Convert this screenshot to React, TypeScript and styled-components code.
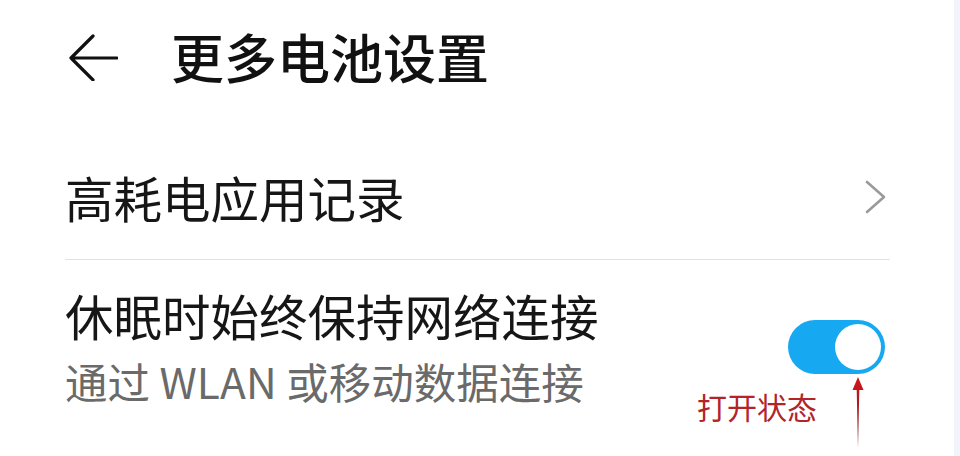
import { createGlobalStyle, styled } from 'styled-components';

const GlobalStyle = createGlobalStyle`
    html, body {
        margin: 0;
        padding: 0;
        background: #f1f4fb;
    }
    body {
        font-family: 'Noto Sans CJK SC', 'Noto Sans', sans-serif;
    }
`;

const Page = styled.div`
    position: relative;
    width: 960px;
    height: 456px;
    display: flex;
    overflow: hidden;
`;

const Panel = styled.div`
    width: 954px;
    background: #ffffff;
    display: flex;
    flex-direction: column;
`;

const Header = styled.header`
    display: flex;
    align-items: center;
    padding: 30px 0 38px 66px;
`;

const BackButton = styled.button`
    border: none;
    background: none;
    padding: 0;
    width: 56px;
    height: 52px;
    display: flex;
    align-items: center;
`;

const Title = styled.h1`
    margin: 0 0 0 49px;
    font-size: 53px;
    line-height: 52px;
    font-weight: 500;
    color: #111111;
`;

const List = styled.div`
    padding: 0 64px 0 65px;
    display: flex;
    flex-direction: column;
`;

const Row = styled.div<{ divider?: boolean }>`
    display: flex;
    align-items: center;
    justify-content: space-between;
    padding: ${({ divider }) => (divider ? '53px 0 38px' : '31px 0 0')};
    border-bottom: ${({ divider }) => (divider ? '1px solid #e2e2e2' : 'none')};
`;

const TextBlock = styled.div`
    display: flex;
    flex-direction: column;
`;

const Label = styled.span`
    font-size: 48.5px;
    line-height: 48px;
    color: #161616;
`;

const Caption = styled.span`
    margin-top: 21px;
    font-size: 42.5px;
    line-height: 42px;
    color: #6a6a6a;
`;

const Switch = styled.div<{ on: boolean }>`
    width: 97px;
    height: 54px;
    border-radius: 27px;
    background: ${({ on }) => (on ? '#17a8f2' : '#d8d8d8')};
    display: flex;
    align-items: center;
    justify-content: ${({ on }) => (on ? 'flex-end' : 'flex-start')};
    padding: 0 4px;
    box-sizing: border-box;
    margin-right: 5px;
`;

const Knob = styled.div`
    width: 46px;
    height: 46px;
    border-radius: 50%;
    background: #ffffff;
`;

const Note = styled.span`
    position: absolute;
    left: 697px;
    top: 391px;
    font-size: 30px;
    line-height: 30px;
    color: #b3232a;
`;

const NoteArrow = styled.svg`
    position: absolute;
    left: 850px;
    top: 376px;
`;

const App = () => {
    return (
        <Page>
            <GlobalStyle />
            <Panel>
                <Header>
                    <BackButton aria-label="返回">
                        <svg width="52" height="50" viewBox="0 0 52 50">
                            <path
                                d="M51 27H5M27 5L5 27l22 22"
                                fill="none"
                                stroke="#111"
                                strokeWidth="3.2"
                                strokeLinecap="round"
                                strokeLinejoin="round"
                            />
                        </svg>
                    </BackButton>
                    <Title>更多电池设置</Title>
                </Header>
                <List>
                    <Row divider>
                        <Label>高耗电应用记录</Label>
                        <svg width="26" height="36" viewBox="0 0 26 36">
                            <path
                                d="M3 3l17 15L3 33"
                                fill="none"
                                stroke="#9a9a9a"
                                strokeWidth="2.6"
                                strokeLinecap="round"
                                strokeLinejoin="round"
                            />
                        </svg>
                    </Row>
                    <Row>
                        <TextBlock>
                            <Label>休眠时始终保持网络连接</Label>
                            <Caption>通过 WLAN 或移动数据连接</Caption>
                        </TextBlock>
                        <Switch on>
                            <Knob />
                        </Switch>
                    </Row>
                </List>
            </Panel>
            <Note>打开状态</Note>
            <NoteArrow width="16" height="74" viewBox="0 0 16 74">
                <defs>
                    <linearGradient id="arrowRed" x1="0" y1="0" x2="0" y2="1">
                        <stop offset="0" stopColor="#d0161c" />
                        <stop offset="1" stopColor="#7a1a1c" />
                    </linearGradient>
                </defs>
                <path d="M8 1L2.5 14h4.2L8 72l1.3-58h4.2z" fill="url(#arrowRed)" />
            </NoteArrow>
        </Page>
    );
};

export default App;
